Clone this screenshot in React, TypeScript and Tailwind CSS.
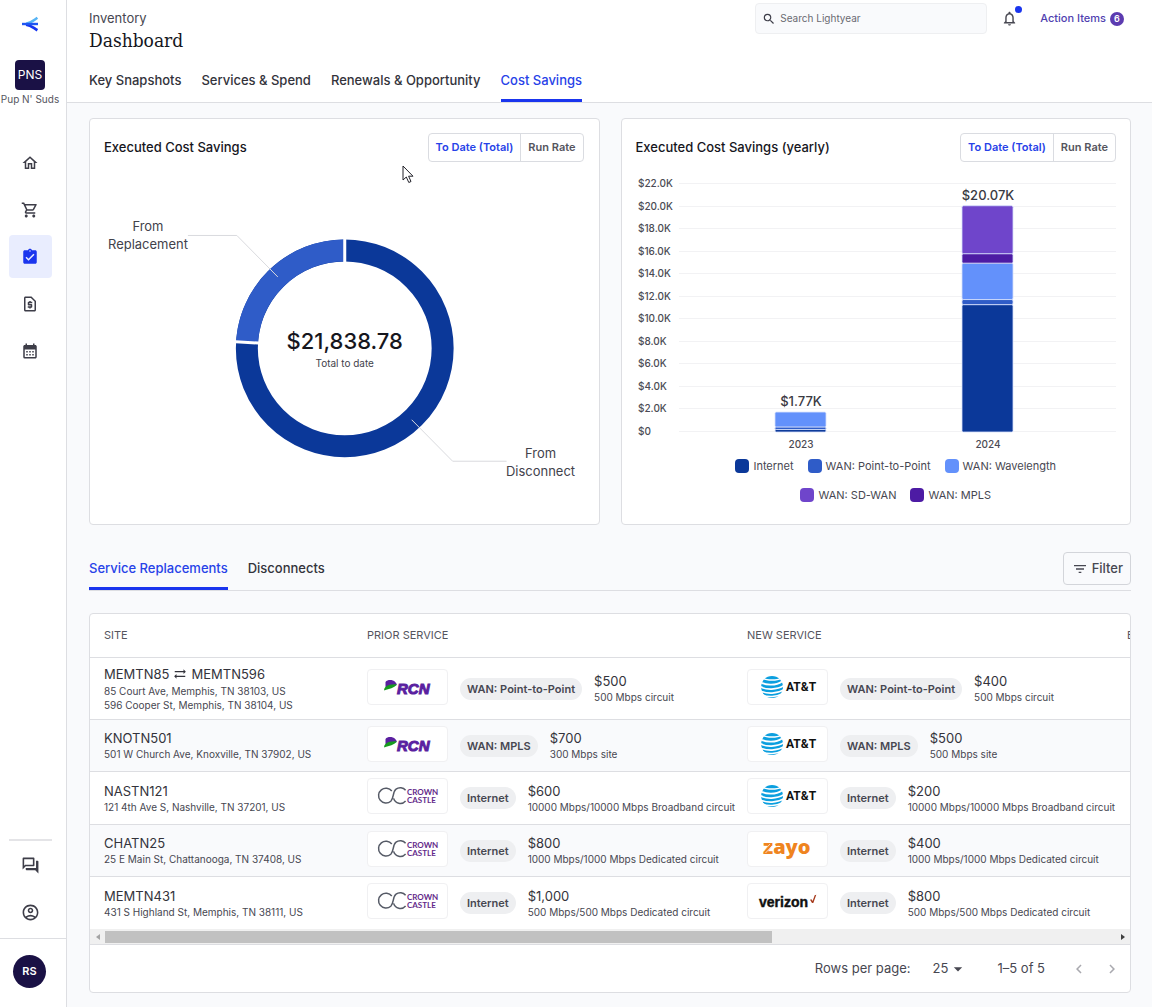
import React, { useState } from 'react';
import {
  MdOutlineHome, MdOutlineShoppingCart, MdAssignmentTurnedIn, MdOutlineRequestPage, MdCalendarMonth,
  MdOutlineForum, MdOutlineAccountCircle, MdSearch, MdNotificationsNone, MdFilterList,
  MdArrowDropDown, MdChevronLeft, MdChevronRight, MdSyncAlt
} from 'react-icons/md';

type Carrier = 'rcn' | 'crown' | 'att' | 'zayo' | 'verizon';

interface Service {
  carrier: Carrier;
  type: string;
  price: string;
  detail: string;
}

interface Replacement {
  site: string;
  siteTo?: string;
  addresses: string[];
  prior: Service;
  next: Service;
}

const REPLACEMENTS: Replacement[] = [
  {
    site: 'MEMTN85',
    siteTo: 'MEMTN596',
    addresses: ['85 Court Ave, Memphis, TN 38103, US', '596 Cooper St, Memphis, TN 38104, US'],
    prior: { carrier: 'rcn', type: 'WAN: Point-to-Point', price: '$500', detail: '500 Mbps circuit' },
    next: { carrier: 'att', type: 'WAN: Point-to-Point', price: '$400', detail: '500 Mbps circuit' },
  },
  {
    site: 'KNOTN501',
    addresses: ['501 W Church Ave, Knoxville, TN 37902, US'],
    prior: { carrier: 'rcn', type: 'WAN: MPLS', price: '$700', detail: '300 Mbps site' },
    next: { carrier: 'att', type: 'WAN: MPLS', price: '$500', detail: '500 Mbps site' },
  },
  {
    site: 'NASTN121',
    addresses: ['121 4th Ave S, Nashville, TN 37201, US'],
    prior: { carrier: 'crown', type: 'Internet', price: '$600', detail: '10000 Mbps/10000 Mbps Broadband circuit' },
    next: { carrier: 'att', type: 'Internet', price: '$200', detail: '10000 Mbps/10000 Mbps Broadband circuit' },
  },
  {
    site: 'CHATN25',
    addresses: ['25 E Main St, Chattanooga, TN 37408, US'],
    prior: { carrier: 'crown', type: 'Internet', price: '$800', detail: '1000 Mbps/1000 Mbps Dedicated circuit' },
    next: { carrier: 'zayo', type: 'Internet', price: '$400', detail: '1000 Mbps/1000 Mbps Dedicated circuit' },
  },
  {
    site: 'MEMTN431',
    addresses: ['431 S Highland St, Memphis, TN 38111, US'],
    prior: { carrier: 'crown', type: 'Internet', price: '$1,000', detail: '500 Mbps/500 Mbps Dedicated circuit' },
    next: { carrier: 'verizon', type: 'Internet', price: '$800', detail: '500 Mbps/500 Mbps Dedicated circuit' },
  },
];

const NAV = [
  { label: 'Home', icon: MdOutlineHome },
  { label: 'Shop', icon: MdOutlineShoppingCart },
  { label: 'Inventory', icon: MdAssignmentTurnedIn },
  { label: 'Billing', icon: MdOutlineRequestPage },
  { label: 'Calendar', icon: MdCalendarMonth },
];

const PAGE_TABS = ['Key Snapshots', 'Services & Spend', 'Renewals & Opportunity', 'Cost Savings'];
const TABLE_TABS = ['Service Replacements', 'Disconnects'];

const LEGEND = [
  { label: 'Internet', color: 'bg-[#0b3899]' },
  { label: 'WAN: Point-to-Point', color: 'bg-[#2f5cc8]' },
  { label: 'WAN: Wavelength', color: 'bg-[#6391fb]' },
  { label: 'WAN: SD-WAN', color: 'bg-[#6f45cb]' },
  { label: 'WAN: MPLS', color: 'bg-[#4d1ba4]' },
];

// Stacked from the bottom up, in thousands of dollars
const YEARS = [
  {
    year: '2023', x: 139, total: '$1.77K',
    stack: [{ v: 0.22, c: '#0b3899' }, { v: 0.23, c: '#2f5cc8' }, { v: 1.32, c: '#6391fb' }],
  },
  {
    year: '2024', x: 326, total: '$20.07K',
    stack: [
      { v: 11.3, c: '#0b3899' }, { v: 0.45, c: '#2f5cc8' }, { v: 3.23, c: '#6391fb' },
      { v: 0.84, c: '#4d1ba4' }, { v: 4.25, c: '#6f45cb' },
    ],
  },
];

function BrandMark() {
  return (
    <svg width="18" height="16" viewBox="0 0 18 16" fill="none" aria-hidden="true">
      <path d="M5 7.600C10 7 12 4.800 16.400 1.800" stroke="#56b4f5" strokeWidth="2.400" />
      <path d="M5 8.600C10 9.200 12 11.600 16.400 14.200" stroke="#1433f0" strokeWidth="2.800" />
      <path d="M1 8H17" stroke="#1f56f2" strokeWidth="2.400" />
    </svg>
  );
}

function CarrierLogo({ carrier }: { carrier: Carrier }) {
  return (
    <span className="mb-[3px] flex h-9 w-[81px] shrink-0 items-center justify-center rounded border border-[#f0f0f2] bg-white">
      {carrier === 'rcn' && (
        <svg width="79" height="34" viewBox="0 0 79 34" role="img" aria-label="RCN">
          <path d="M17.500 12C19.500 9.500 24.500 9.400 27.200 12C28.600 13.400 28.800 14.400 28.500 15.200L17.500 17.500Z" fill="#5a1fa0" />
          <path d="M16.300 20.500C15.400 17.600 19 13.600 28.800 14.200C26 18.600 21.500 18.400 16.300 20.500Z" fill="#189a1f" />
          <text x="29" y="24" fontSize="15" fontStyle="italic" fontWeight="900" fill="#5a1fa0" stroke="#5a1fa0" className="font-['Liberation_Sans',sans-serif]">RCN</text>
        </svg>
      )}
      {carrier === 'crown' && (
        <svg width="79" height="34" viewBox="0 0 79 34" role="img" aria-label="Crown Castle">
          <path
            d="M23.800 12A7.400 7.400 0 1 0 22.800 22.200C26.200 19 24.400 13 28 10.200A6.800 6.800 0 0 1 37.600 11.200M37.600 22A7 7 0 0 1 25.600 19.400"
            fill="none" stroke="#555a66" strokeWidth="1.500"
          />
          <text x="39" y="16" fontSize="8" fontWeight="700" fill="#64298a" className="font-[Lato,sans-serif]">CROWN</text>
          <text x="39" y="24" fontSize="8" fontWeight="700" fill="#64298a" className="font-[Lato,sans-serif]">CASTLE</text>
        </svg>
      )}
      {carrier === 'att' && (
        <svg width="79" height="34" viewBox="0 0 79 34" role="img" aria-label="AT&T">
          <circle cx="24" cy="17" r="11" fill="#0b9fdf" />
          <g fill="none" stroke="#ffffff">
            <path d="M15 8.400C19 10.600 29 10.600 33 8.400" strokeWidth="1.400" />
            <path d="M12.500 12.200C18 15.600 28 15.600 34 11.400" strokeWidth="1.800" />
            <path d="M12 16.600C18 20.200 29 20 36 15.600" strokeWidth="1.800" />
            <path d="M12.500 21C19 24.200 29 24 36 19.600" strokeWidth="1.700" />
            <path d="M14.500 25C20 27.400 28 27 34 24" strokeWidth="1.400" />
          </g>
          <text x="38" y="21" fontSize="12" fontWeight="700" fill="#111111" className="font-[Roboto,sans-serif]">AT&amp;T</text>
        </svg>
      )}
      {carrier === 'zayo' && (
        <svg width="79" height="34" viewBox="0 0 79 34" role="img" aria-label="zayo">
          <text x="15" y="22" fontSize="20" fontWeight="800" fill="#ef8420" className="font-['Open_Sans',sans-serif]">zayo</text>
          <path d="M15.500 19L22 12M17.500 21L24 14" stroke="#ffffff" strokeWidth="0.700" />
        </svg>
      )}
      {carrier === 'verizon' && (
        <svg width="79" height="34" viewBox="0 0 79 34" role="img" aria-label="verizon">
          <text x="11" y="23" fontSize="14" fontWeight="700" fill="#111111" stroke="#111111" strokeWidth="0.400" className="font-['Liberation_Sans',sans-serif]">verizon</text>
          <path d="M62 15.800L63.500 15.300L64.600 17L66.700 11.200L68.300 10.800L65.300 19H64Z" fill="#a63a1c" />
        </svg>
      )}
    </span>
  );
}

function ServiceCell({ service }: { service: Service }) {
  return (
    <div className="flex items-center gap-3">
      <CarrierLogo carrier={service.carrier} />
      <span className="mt-px rounded-full bg-[#eeeff1] px-[7px] py-[3px] text-[11px] leading-4 font-semibold whitespace-nowrap text-[#474751]">
        {service.type}
      </span>
      <div className="whitespace-nowrap">
        <p className="text-[13px] leading-[18px] text-[#33333b]">{service.price}</p>
        <p className="text-[10px] leading-[14px] text-[#474751]">{service.detail}</p>
      </div>
    </div>
  );
}

function SavingsToggle() {
  const [mode, setMode] = useState<'total' | 'rate'>('total');

  return (
    <div className="flex h-[29px] rounded border border-[#dadce1] text-[11px] font-semibold">
      <button
        onClick={() => setMode('total')}
        className={`border-r border-[#dadce1] px-[7px] ${mode === 'total' ? 'text-[#2742e8]' : 'text-[#55555e]'}`}
      >
        To Date (Total)
      </button>
      <button
        onClick={() => setMode('rate')}
        className={`px-[7px] ${mode === 'rate' ? 'text-[#2742e8]' : 'text-[#55555e]'}`}
      >
        Run Rate
      </button>
    </div>
  );
}

function DonutChart() {
  return (
    <svg viewBox="0 0 480 300" className="mx-auto mt-[38px] w-full max-w-[480px]" role="img" aria-label="Executed cost savings by source">
      <circle cx="241" cy="148.500" r="98" fill="none" stroke="#0b3899" strokeWidth="22" />
      <path d="M143.200 142.500A98 98 0 0 1 241 50.500" fill="none" stroke="#2f5cc8" strokeWidth="22" />
      <path d="M241 36V64M128 141.600L158 143.400" stroke="#ffffff" strokeWidth="3" />
      <path d="M84 35.500H133L174 77M308 220L349 261.500H403" fill="none" stroke="#d9dade" />
      <g textAnchor="middle" className="font-[Inter,sans-serif]">
        <g fontSize="13" fill="#42424b">
          <text x="44" y="31">From</text>
          <text x="44" y="49">Replacement</text>
          <text x="437" y="258">From</text>
          <text x="437" y="276">Disconnect</text>
        </g>
        <text x="241" y="149" fontSize="22" fontWeight="500" fill="#16161d">$21,838.78</text>
        <text x="241" y="167" fontSize="10" fill="#42424b">Total to date</text>
      </g>
    </svg>
  );
}

function YearlyChart() {
  const base = 262;
  const unit = 248 / 22;
  const ticks = Array.from({ length: 12 }, (_, i) => i * 2);

  return (
    <svg viewBox="0 0 480 284" className="mx-auto mt-[8px] w-full max-w-[480px] font-[Inter,sans-serif]" role="img" aria-label="Executed cost savings by year">
      {ticks.map((t) => {
        const y = Math.round(base - t * unit);
        return (
          <g key={t}>
            <path d={`M43 ${y - 0.5}H480`} stroke="#f2f2f4" />
            <text x="2" y={y + 3} fontSize="10" fontWeight="500" fill="#4b4b54">
              {t === 0 ? '$0' : `$${t}.0K`}
            </text>
          </g>
        );
      })}
      {YEARS.map(({ year, x, total, stack }) => {
        let sum = 0;
        const bars = stack.map((s) => {
          sum += s.v;
          return (
            <rect
              key={s.c} x={x} y={base - sum * unit} width="51" height={s.v * unit}
              rx="1.5" fill={s.c} stroke="#d5e0fb" strokeWidth="0.8"
            />
          );
        });
        return (
          <g key={year} textAnchor="middle">
            {bars}
            <text x={x + 26} y={base - sum * unit - 6} fontSize="13" fontWeight="500" fill="#3a3a42">{total}</text>
            <text x={x + 26} y="278" fontSize="10" fontWeight="500" fill="#4b4b54">{year}</text>
          </g>
        );
      })}
    </svg>
  );
}

function Sidebar() {
  return (
    <aside className="sticky top-0 flex h-screen w-[67px] shrink-0 flex-col border-r border-[#dddee2] bg-white">
      <div className="flex w-[60px] flex-1 flex-col items-center">
        <a href="#home" aria-label="Lightyear" className="mt-4"><BrandMark /></a>
        <button className="mt-7 flex size-[30px] items-center justify-center rounded bg-[#1a1145] text-[12px] text-white">
          PNS
        </button>
        <p className="mt-[1px] text-[10px] leading-4 whitespace-nowrap text-[#55555e]">Pup N' Suds</p>
        <nav className="mt-[34px] flex flex-col gap-1">
          {NAV.map(({ label, icon: Icon }) => (
            <a
              key={label}
              href={`#${label.toLowerCase()}`}
              aria-label={label}
              className={`flex size-[43px] items-center justify-center rounded ${
                label === 'Inventory' ? 'bg-[#e9edfe] text-[#1a35ee]' : 'text-[#3d3d48]'
              }`}
            >
              <Icon className="size-[18px]" />
            </a>
          ))}
        </nav>
        <div className="mt-auto flex flex-col gap-1 border-t-2 border-[#e4e4e7] pt-[3px]">
          <a href="#messages" aria-label="Messages" className="flex size-[43px] items-center justify-center text-[#3d3d48]">
            <MdOutlineForum className="size-[19px]" />
          </a>
          <a href="#account" aria-label="Account" className="flex size-[43px] items-center justify-center text-[#3d3d48]">
            <MdOutlineAccountCircle className="size-[19px]" />
          </a>
        </div>
      </div>
      <div className="mt-1 border-t border-[#dddee2] pt-4 pb-[19px]">
        <button className="ml-[13px] flex size-[33px] items-center justify-center rounded-full bg-[#1a1145] text-[11px] font-semibold text-white">
          RS
        </button>
      </div>
    </aside>
  );
}

function Header() {
  const [tab, setTab] = useState('Cost Savings');

  return (
    <header className="border-b border-[#dddee2] bg-white pl-[22px]">
      <div className="flex justify-between">
        <div className="pt-[9px]">
          <p className="text-[13px] leading-[18px] text-[#474751]">Inventory</p>
          <h1 className="font-['DejaVu_Serif_Condensed','DejaVu_Serif',serif] text-[19px] leading-[26px] text-[#16161d]">Dashboard</h1>
        </div>
        <div className="mt-[2px] flex h-[30px] items-center pt-[3px] pr-7">
          <label className="flex h-[31px] w-[232px] items-center gap-1 rounded border border-[#eeeff1] bg-[#f9fafc] pl-[6px] text-[#3d3d48]">
            <MdSearch className="size-[14px]" />
            <input
              type="search"
              aria-label="Search"
              placeholder="Search Lightyear"
              className="min-w-0 flex-1 bg-transparent text-[10px] outline-none placeholder:text-[#6a6a72]"
            />
          </label>
          <button aria-label="Notifications" className="relative ml-[14px] text-[#474751]">
            <MdNotificationsNone className="size-[17px]" />
            <span className="absolute -top-1 -right-1 size-[7px] rounded-full bg-[#1a35ee]" />
          </button>
          <a href="#actions" className="ml-[22px] flex items-center gap-1 text-[11px] font-medium text-[#4f3fb0]">
            Action Items
            <span className="flex size-[14px] items-center justify-center rounded-full bg-[#5c3bb0] text-[9px] font-semibold text-white">6</span>
          </a>
        </div>
      </div>
      <nav className="mt-[14px] flex gap-5">
        {PAGE_TABS.map((name) => (
          <button
            key={name}
            onClick={() => setTab(name)}
            className={`h-[35px] border-b-3 pb-1 text-[13px] font-medium ${
              tab === name ? 'border-[#1a35ee] text-[#2742e8]' : 'border-transparent text-[#33333b]'
            }`}
          >
            {name}
          </button>
        ))}
      </nav>
    </header>
  );
}

function ReplacementTable() {
  return (
    <section className="mt-[22px] rounded border border-[#dddee2] bg-white">
      <div className="overflow-hidden">
        <table className="w-[1577px] table-fixed text-left">
          <thead>
            <tr className="h-[43px] border-b border-[#dddee2] text-[11px] text-[#55555e] [&>th]:pl-[14px] [&>th]:font-normal">
              <th className="w-[263px]">SITE</th>
              <th className="w-[380px]">PRIOR SERVICE</th>
              <th className="w-[380px]">NEW SERVICE</th>
              <th>EXECUTED</th>
            </tr>
          </thead>
          <tbody>
            {REPLACEMENTS.map((row) => (
              <tr key={row.site} className="h-[53px] border-b border-[#dddee2] first:h-[62px] last:border-b-0 even:h-[52px] even:bg-[#f9fafc] [&>td]:pl-[14px]">
                <td>
                  <p className={`flex items-center gap-1 text-[13px] leading-[18px] text-[#33333b] ${row.siteTo ? 'mb-px' : ''}`}>
                    {row.site}
                    {row.siteTo && <MdSyncAlt className="size-[14px]" />}
                    {row.siteTo}
                  </p>
                  {row.addresses.map((address) => (
                    <p key={address} className="text-[10px] leading-[14px] text-[#474751]">{address}</p>
                  ))}
                </td>
                <td><ServiceCell service={row.prior} /></td>
                <td><ServiceCell service={row.next} /></td>
                <td />
              </tr>
            ))}
          </tbody>
        </table>
      </div>

      {/* Horizontal scroll track */}
      <div className="flex h-[15px] items-center bg-[#f0f0f0]">
        <button aria-label="Scroll left" className="flex w-[15px] justify-center text-[#a3a3a3]">
          <svg width="4" height="6" viewBox="0 0 4 6" fill="currentColor"><path d="M4 0V6L0 3Z" /></svg>
        </button>
        <div className="flex-1">
          <div className="h-3 w-[66%] bg-[#c1c1c1]" />
        </div>
        <button aria-label="Scroll right" className="flex w-[15px] justify-center text-[#404040]">
          <svg width="4" height="6" viewBox="0 0 4 6" fill="currentColor"><path d="M0 0V6L4 3Z" /></svg>
        </button>
      </div>

      <div className="flex h-[48px] items-center justify-end border-t border-[#dddee2] pr-[9px] text-[13px] text-[#474751]">
        <label htmlFor="page-size">Rows per page:</label>
        <span className="relative ml-[22px] flex items-center">
          <select id="page-size" defaultValue="25" className="w-[32px] appearance-none outline-none">
            <option>25</option>
            <option>50</option>
          </select>
          <MdArrowDropDown className="pointer-events-none absolute left-4 size-5" />
        </span>
        <span className="ml-[33px]">1–5 of 5</span>
        <button aria-label="Previous page" className="ml-[25px] text-[#a9a9af]"><MdChevronLeft className="size-[18px]" /></button>
        <button aria-label="Next page" className="ml-[15px] text-[#a9a9af]"><MdChevronRight className="size-[18px]" /></button>
      </div>
    </section>
  );
}

export default function App() {
  const [tableTab, setTableTab] = useState('Service Replacements');

  return (
    <div className="flex min-h-screen bg-[#f9fafc] font-[Inter,sans-serif]">
      <Sidebar />
      <div className="min-w-0 flex-1">
        <Header />
        <main className="px-[21px] pt-[15px] pb-[14px] pl-[22px]">
          <div className="grid grid-cols-2 gap-[21px]">
            <section className="relative min-h-[407px] rounded border border-[#dddee2] bg-white pt-[14px] pr-[15px] pl-[14px]">
              <div className="flex items-center justify-between">
                <h2 className="text-[13px] font-medium text-[#16161d]">Executed Cost Savings</h2>
                <SavingsToggle />
              </div>
              <DonutChart />
              {/* Pointer */}
              <svg className="absolute top-[46px] left-[312px]" width="13" height="19" viewBox="0 0 13 19" aria-hidden="true">
                <path d="M1 1V15L4.300 12L6.800 17.500L9 16.500L6.600 11.200H11Z" fill="#ffffff" stroke="#22222a" />
              </svg>
            </section>
            <section className="min-h-[407px] rounded border border-[#dddee2] bg-white px-[14px] pt-[14px]">
              <div className="flex items-center justify-between">
                <h2 className="text-[13px] font-medium text-[#16161d]">Executed Cost Savings (yearly)</h2>
                <SavingsToggle />
              </div>
              <YearlyChart />
              <ul className="mx-auto mt-1 flex max-w-[400px] flex-wrap justify-center gap-x-[14px] gap-y-[13px] pl-10 text-[11px] leading-4 text-[#474751]">
                {LEGEND.map(({ label, color }) => (
                  <li key={label} className="flex items-center gap-1">
                    <span className={`size-[14px] rounded ${color}`} />
                    {label}
                  </li>
                ))}
              </ul>
            </section>
          </div>

          <div className="mt-[27px] flex items-start justify-between border-b border-[#dddee2]">
            <div className="flex gap-5">
              {TABLE_TABS.map((name) => (
                <button
                  key={name}
                  onClick={() => setTableTab(name)}
                  className={`h-[38px] border-b-3 pb-px text-[13px] font-medium ${
                    tableTab === name ? 'border-[#1a35ee] text-[#2742e8]' : 'border-transparent text-[#33333b]'
                  }`}
                >
                  {name}
                </button>
              ))}
            </div>
            <button className="flex h-[33px] items-center gap-1 rounded border border-[#d3d5da] pr-[7px] pl-2 text-[13px] font-medium text-[#474751]">
              <MdFilterList className="size-4" />
              Filter
            </button>
          </div>

          <ReplacementTable />
        </main>
      </div>
    </div>
  );
}
